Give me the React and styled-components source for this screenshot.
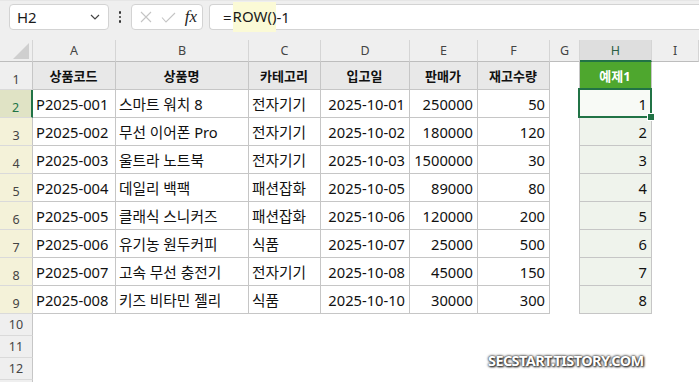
import React from "react";
import styled, { createGlobalStyle } from "styled-components";

const rows = [
  ["P2025-001", "스마트 워치 8", "전자기기", "2025-10-01", "250000", "50"],
  ["P2025-002", "무선 이어폰 Pro", "전자기기", "2025-10-02", "180000", "120"],
  ["P2025-003", "울트라 노트북", "전자기기", "2025-10-03", "1500000", "30"],
  ["P2025-004", "데일리 백팩", "패션잡화", "2025-10-05", "89000", "80"],
  ["P2025-005", "클래식 스니커즈", "패션잡화", "2025-10-06", "120000", "200"],
  ["P2025-006", "유기농 원두커피", "식품", "2025-10-07", "25000", "500"],
  ["P2025-007", "고속 무선 충전기", "전자기기", "2025-10-08", "45000", "150"],
  ["P2025-008", "키즈 비타민 젤리", "식품", "2025-10-10", "30000", "300"],
];

const headers = ["상품코드", "상품명", "카테고리", "입고일", "판매가", "재고수량"];
const letters = ["A", "B", "C", "D", "E", "F", "G", "H", "I"];
const rightCols = [3, 4, 5];

const GlobalStyle = createGlobalStyle`
  html, body {
    margin: 0;
    padding: 0;
    background: #ffffff;
    overflow: hidden;
  }
  body {
    font-family: "Noto Sans", "Noto Sans CJK KR", sans-serif;
  }
`;

export default function App() {
  return (
    <Page>
      <GlobalStyle />
      <FormulaBar>
        <NameBox>
          <span>H2</span>
          <svg width="10" height="6" viewBox="0 0 10 6">
            <path d="M1 1 L5 5 L9 1" fill="none" stroke="#444" strokeWidth="1.2" />
          </svg>
        </NameBox>
        <Dots>
          <i />
          <i />
          <i />
        </Dots>
        <FxBox>
          <svg width="12" height="12" viewBox="0 0 12 12">
            <path d="M1 1 L11 11 M11 1 L1 11" stroke="#c4c4c4" strokeWidth="1.1" />
          </svg>
          <svg width="15" height="11" viewBox="0 0 15 11">
            <path d="M1 5.5 L5 10 L14 1" fill="none" stroke="#c4c4c4" strokeWidth="1.1" />
          </svg>
          <Fx>fx</Fx>
        </FxBox>
        <FormulaInput>
          <span>=</span>
          <Mark>ROW()</Mark>
          <span>-1</span>
        </FormulaInput>
      </FormulaBar>

      <Sheet>
        <Corner>
          <svg width="16" height="16" viewBox="0 0 16 16">
            <path d="M16 0 L16 16 L0 16 Z" fill="#cfcfcf" />
          </svg>
        </Corner>
        {letters.map((l) => (
          <ColHead key={l} $active={l === "H"}>
            {l}
          </ColHead>
        ))}

        <RowHead>1</RowHead>
        {headers.map((h) => (
          <Cell key={h} $bordered $bg="#e8e8e8" $align="center" $head>
            {h}
          </Cell>
        ))}
        <Cell $gap />
        <Cell $bordered $bg="#4ea72e" $align="center" $head $color="#ffffff">
          예제1
        </Cell>
        <Cell />

        {rows.map((r, i) => (
          <React.Fragment key={r[0]}>
            <RowHead $state={i === 0 ? "active" : "picked"}>{i + 2}</RowHead>
            {r.map((v, c) => (
              <Cell key={c} $bordered $align={rightCols.includes(c) ? "right" : "left"}>
                {v}
              </Cell>
            ))}
            <Cell $gap />
            <Cell $bordered $align="right" $bg={i === 0 ? "#f8faf6" : "#eff3ec"} $active={i === 0}>
              {i + 1}
            </Cell>
            <Cell />
          </React.Fragment>
        ))}

        {[10, 11, 12, ""].map((n) => (
          <React.Fragment key={`r${n}`}>
            <RowHead $short>{n}</RowHead>
            {letters.map((l) => (
              <Cell key={l} />
            ))}
          </React.Fragment>
        ))}
      </Sheet>

      <Watermark>SECSTART.TISTORY.COM</Watermark>
    </Page>
  );
}

const Page = styled.div`
  position: relative;
  width: 699px;
  height: 382px;
  overflow: hidden;
  background: #ffffff;
`;

const FormulaBar = styled.div`
  display: flex;
  align-items: center;
  height: 40px;
  padding: 0 0 0 9px;
  box-sizing: border-box;
  background: #efefef;
  border-top: 1px solid #e6e6e6;
`;

const Box = styled.div`
  display: flex;
  align-items: center;
  height: 26px;
  box-sizing: border-box;
  background: #ffffff;
  border: 1px solid #d3d3d3;
  border-radius: 4px;
  margin-top: -7px;
`;

const NameBox = styled(Box)`
  width: 100px;
  justify-content: space-between;
  padding: 0 8px 0 7px;
  font-size: 15px;
  color: #1a1a1a;
`;

const Dots = styled.div`
  display: flex;
  flex-direction: column;
  gap: 2px;
  width: 22px;
  align-items: center;
  margin-top: -7px;

  i {
    display: block;
    width: 2.5px;
    height: 2.5px;
    border-radius: 50%;
    background: #333;
  }
`;

const FxBox = styled(Box)`
  width: 72px;
  padding: 0 5px 0 8px;
  justify-content: space-between;
`;

const Fx = styled.span`
  font-family: "Liberation Serif", serif;
  font-style: italic;
  font-size: 17px;
  color: #222;
  line-height: 1;
  margin-bottom: 2px;
`;

const FormulaInput = styled(Box)`
  flex: 1;
  margin-left: 6px;
  border-right: none;
  border-radius: 4px 0 0 4px;
  padding-left: 13px;
  font-size: 15px;
  color: #1a1a1a;
  overflow: visible;
`;

const Mark = styled.span`
  background: #fbfad6;
  padding: 4px 0 6px;
  margin-left: 1px;
`;

const Sheet = styled.div`
  display: grid;
  grid-template-columns: 33px 83px 133px 72px 89px 68px 72px 30px 72px 47px;
  grid-template-rows: 22px repeat(9, 28px) repeat(4, 22px);
`;

const Corner = styled.div`
  background: #efefef;
  border-right: 1px solid #d5d5d5;
  border-bottom: 1px solid #bdbdbd;
  display: flex;
  align-items: flex-end;
  justify-content: flex-end;
  padding: 0 3px 2px 0;
  box-sizing: border-box;
`;

const ColHead = styled.div`
  display: flex;
  align-items: center;
  justify-content: center;
  box-sizing: border-box;
  background: ${(p) => (p.$active ? "#dedede" : "#efefef")};
  border-right: 1px solid #d5d5d5;
  border-bottom: ${(p) => (p.$active ? "2px solid #217346" : "1px solid #bdbdbd")};
  font-size: 12.5px;
  color: ${(p) => (p.$active ? "#2b5f44" : "#444444")};
`;

const rowHeadBg = { active: "#e0e3c5", picked: "#f4f2d9" };

const RowHead = styled.div`
  display: flex;
  align-items: flex-end;
  justify-content: center;
  padding-bottom: ${(p) => (p.$short ? "2px" : "1px")};
  line-height: 17px;
  box-sizing: border-box;
  background: ${(p) => rowHeadBg[p.$state] || "#efefef"};
  border-right: ${(p) => (p.$state === "active" ? "2px solid #217346" : "1px solid #c6c6c6")};
  border-bottom: 1px solid #dadada;
  font-size: 12.5px;
  color: ${(p) => (p.$state === "active" ? "#217346" : "#444444")};
`;

const Cell = styled.div`
  position: relative;
  display: flex;
  align-items: center;
  justify-content: ${(p) =>
    p.$align === "right" ? "flex-end" : p.$align === "center" ? "center" : "flex-start"};
  padding: 0 4px 0 3px;
  box-sizing: border-box;
  white-space: nowrap;
  background: ${(p) => p.$bg || "#ffffff"};
  border-right: ${(p) => (p.$bordered || p.$gap ? "1px solid #c6c6c6" : "none")};
  border-bottom: ${(p) => (p.$bordered ? "1px solid #c6c6c6" : "none")};
  font-size: ${(p) => (p.$head ? "13px" : "14.7px")};
  font-weight: ${(p) => (p.$head ? 700 : 400)};
  color: ${(p) => p.$color || "#111111"};

  ${(p) =>
    p.$active &&
    `
    &::after {
      content: "";
      position: absolute;
      left: -2px;
      top: -2px;
      right: -1px;
      bottom: -1px;
      border: 2px solid #217346;
    }
    &::before {
      content: "";
      position: absolute;
      right: -4px;
      bottom: -4px;
      width: 6px;
      height: 6px;
      background: #217346;
      border: 1px solid #ffffff;
      z-index: 2;
    }
  `}
`;

const Watermark = styled.div`
  position: absolute;
  left: 488px;
  top: 350px;
  font-family: "Noto Sans", sans-serif;
  font-weight: 700;
  font-size: 14.5px;
  letter-spacing: -0.6px;
  color: #ffffff;
  text-shadow: 0 0 3px #333, 0 0 2px #333, 1px 1px 2px #222;
`;
